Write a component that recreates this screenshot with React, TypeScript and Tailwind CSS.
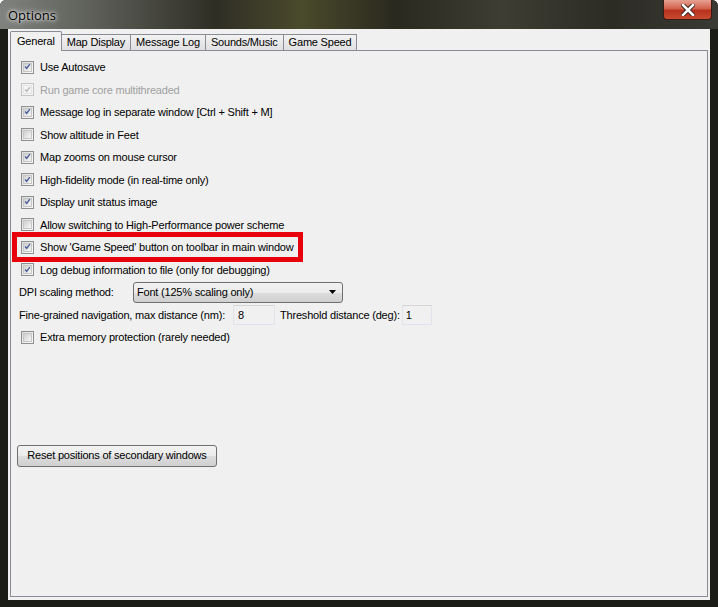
import React from "react";

const font = { fontFamily: '"Liberation Sans", Arial, sans-serif' };

const Check = ({ checked, disabled }: { checked: boolean; disabled?: boolean }) => (
  <span
    className={`flex items-center justify-center w-[13px] h-[13px] border ${
      disabled ? "border-[#c4c4c4] bg-[#f4f4f4]" : "border-[#8e8f8f] bg-[linear-gradient(135deg,#dcdcdc,#fbfbfb)]"
    }`}
  >
    <span
      className={`flex items-center justify-center w-[9px] h-[9px] border ${
        disabled ? "border-[#e4e4e4]" : "border-[#c6c6c6] bg-[linear-gradient(135deg,#cfcfcf,#f6f6f6)]"
      }`}
    >
      {checked && (
        <svg width="9" height="9" viewBox="0 0 9 9" className="-mt-[1px]">
          <path
            d="M1.5 4.5 L3.5 7 L7.5 1.5"
            fill="none"
            stroke={disabled ? "#b8b8b8" : "#4b5f9b"}
            strokeWidth="1.8"
          />
        </svg>
      )}
    </span>
  </span>
);

const CheckRow = ({
  label,
  checked,
  disabled,
  children,
}: {
  label: string;
  checked: boolean;
  disabled?: boolean;
  children?: React.ReactNode;
}) => (
  <div className="relative flex items-center h-[22.5px] pl-[10px]">
    <Check checked={checked} disabled={disabled} />
    <span className={`ml-[6px] ${disabled ? "text-[#a0a0a0]" : "text-black"}`}>{label}</span>
    {children}
  </div>
);

const tabs = ["General", "Map Display", "Message Log", "Sounds/Music", "Game Speed"];

export default function App() {
  return (
    <div
      className="w-[718px] h-[607px] flex flex-col bg-[#1b1b17] overflow-hidden text-[11px] tracking-[-0.2px] rounded-t-[6px] whitespace-nowrap"
      style={font}
    >
      {/* title bar */}
      <div className="h-[29px] flex items-start justify-between bg-[linear-gradient(90deg,#7f827e_0%,#5a5c55_14%,#2f2e25_30%,#4a4a2c_42%,#2a291f_55%,#3d3d33_70%,#2c2c25_85%,#3a3a34_100%)]">
        <span
          className="ml-[8px] mt-[6px] text-[13px] tracking-normal text-black"
          style={{ fontFamily: '"Open Sans", "Liberation Sans", sans-serif', textShadow: "0 0 6px #fff, 0 0 3px #fff" }}
        >
          Options
        </span>
        <div className="mr-[6px] w-[49px] h-[20px] flex items-center justify-center rounded-b-[4px] border border-t-0 border-[#3a1a14] bg-[linear-gradient(180deg,#e6a192_0%,#d3624c_45%,#b8321d_55%,#c74a30_100%)]">
          <svg width="14" height="12" viewBox="0 0 14 12">
            <path d="M2 1 L12 11 M12 1 L2 11" stroke="#3a2020" strokeWidth="4.5" strokeLinecap="square" />
            <path d="M2 1 L12 11 M12 1 L2 11" stroke="#ffffff" strokeWidth="2.5" strokeLinecap="square" />
          </svg>
        </div>
      </div>

      {/* client area */}
      <div className="flex-1 mx-[8px] mb-[7px] bg-[#f0f0f0] flex flex-col px-[2px] pt-[2px] pb-[3px]">
        {/* tabs */}
        <div className="flex items-end h-[19px] relative z-10">
          {tabs.map((t, i) =>
            i === 0 ? (
              <div
                key={t}
                className="h-[20px] px-[6px] flex items-center border border-b-0 border-[#898c95] bg-[#f0f0f0] rounded-t-[2px] -mb-[1px] pb-[1px]"
              >
                General
              </div>
            ) : (
              <div
                key={t}
                className="h-[16px] px-[5px] flex items-center border border-l-0 border-b-0 border-[#898c95] bg-[linear-gradient(180deg,#f2f2f2,#e0e0e0)] text-black"
              >
                {t}
              </div>
            )
          )}
        </div>

        {/* panel */}
        <div className="flex-1 border border-[#898c95] bg-[#f0f0f0] flex flex-col pt-[5px]">
          <CheckRow label="Use Autosave" checked />
          <CheckRow label="Run game core multithreaded" checked disabled />
          <CheckRow label="Message log in separate window [Ctrl + Shift + M]" checked />
          <CheckRow label="Show altitude in Feet" checked={false} />
          <CheckRow label="Map zooms on mouse cursor" checked />
          <CheckRow label="High-fidelity mode (in real-time only)" checked />
          <CheckRow label="Display unit status image" checked />
          <CheckRow label="Allow switching to High-Performance power scheme" checked={false} />
          <CheckRow label="Show 'Game Speed' button on toolbar in main window" checked>
            <div className="absolute left-[1px] top-[-4px] w-[291px] h-[30px] border-[5px] border-[#e8000b] pointer-events-none" />
          </CheckRow>
          <CheckRow label="Log debug information to file (only for debugging)" checked />

          <div className="flex items-center h-[22.5px] pl-[8px]">
            <span className="w-[114px]">DPI scaling method:</span>
            <div className="w-[210px] h-[21px] flex items-center justify-between pl-[3px] pr-[6px] rounded-[3px] border border-[#707070] bg-[linear-gradient(180deg,#f2f2f2_0%,#ebebeb_50%,#dddddd_51%,#cfcfcf_100%)]">
              <span>Font (125% scaling only)</span>
              <svg width="7" height="4" viewBox="0 0 7 4">
                <path d="M0 0 L7 0 L3.5 4 Z" fill="#000" />
              </svg>
            </div>
          </div>

          <div className="flex items-center h-[22.5px] pl-[8px]">
            <span>Fine-grained navigation, max distance (nm):</span>
            <div className="ml-[8px] w-[42px] h-[20px] flex items-center pl-[4px] border border-[#e2e3ea] border-t-[#d5d5d5]">
              8
            </div>
            <span className="ml-[5px]">Threshold distance (deg):</span>
            <div className="ml-[2px] w-[30px] h-[20px] flex items-center pl-[3px] border border-[#e2e3ea] border-t-[#d5d5d5]">
              1
            </div>
          </div>

          <CheckRow label="Extra memory protection (rarely needed)" checked={false} />

          <div className="pl-[6px] mt-[96px]">
            <button className="w-[200px] h-[22px] rounded-[3px] border border-[#707070] bg-[linear-gradient(180deg,#f2f2f2_0%,#ebebeb_50%,#dddddd_51%,#cfcfcf_100%)] text-black">
              Reset positions of secondary windows
            </button>
          </div>
        </div>
      </div>
    </div>
  );
}
